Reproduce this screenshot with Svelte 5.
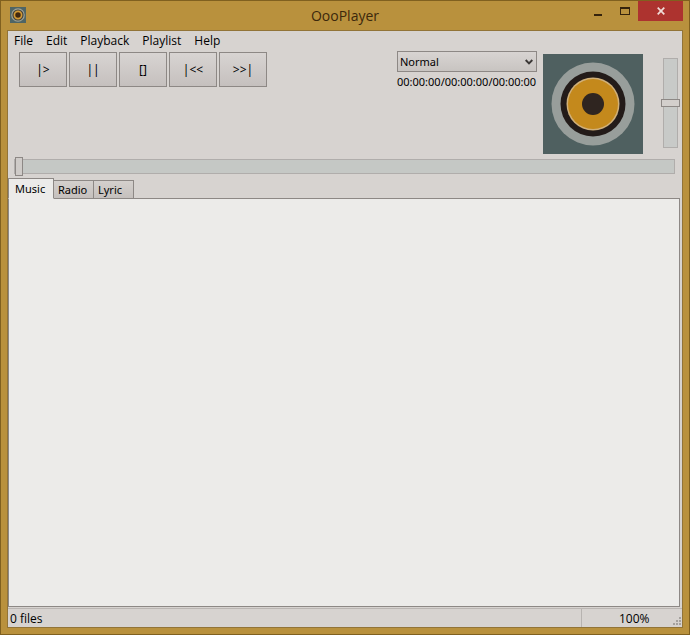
<!--
	OooPlayer main window: menu, transport buttons, seek and volume
	sliders, a tabbed playlist area and the status bar.
-->
<script lang="ts">
	interface Transport {
		glyph: string;
		label: string;
	}

	const menus: string[] = ['File', 'Edit', 'Playback', 'Playlist', 'Help'];
	const tabs: string[] = ['Music', 'Radio', 'Lyric'];
	const modes: string[] = ['Normal', 'Repeat', 'Shuffle'];

	const transport: Transport[] = [
		{ glyph: '|>', label: 'Play' },
		{ glyph: '||', label: 'Pause' },
		{ glyph: '[]', label: 'Stop' },
		{ glyph: '|<<', label: 'Previous' },
		{ glyph: '>>|', label: 'Next' }
	];

	let activeTab: string = $state('Music');
	let mode: string = $state('Normal');
	let position: number = $state(0);
	let volume: number = $state(50);
</script>

{#snippet speaker()}
	<svg viewBox="0 0 100 100" aria-hidden="true">
		<rect width="100" height="100" fill="#4f6060" />
		<circle cx="50" cy="50" r="41.5" fill="#989e9b" />
		<circle cx="50" cy="50" r="32.5" fill="#231b19" />
		<circle cx="50" cy="50" r="26.5" fill="#d0b07a" />
		<circle cx="50" cy="50" r="25" fill="#c4891c" />
		<circle cx="50" cy="50" r="11" fill="#2f2520" />
	</svg>
{/snippet}

<div class="window">
	<header class="titlebar">
		<span class="app-icon">
			<svg viewBox="0 0 16 16" aria-hidden="true">
				<rect width="16" height="16" fill="#4f6565" />
				<circle cx="8" cy="8" r="6.2" fill="#40403a" stroke="#a0a294" stroke-width="1.2" />
				<circle cx="8" cy="8" r="3.6" fill="#40280f" stroke="#d39a35" stroke-width="1.7" />
				<circle cx="8" cy="8" r="1.5" fill="#40280f" />
			</svg>
		</span>
		<h1>OooPlayer</h1>
		<div class="controls">
			<button type="button" aria-label="Minimize">
				<svg width="10" height="10" viewBox="0 0 10 10"><path d="M1 8h8v2H1z" fill="#35230c" /></svg>
			</button>
			<button type="button" aria-label="Maximize">
				<svg width="10" height="10" viewBox="0 0 10 10">
					<path d="M0 1h10v8H0zM1 3v5h8V3z" fill="#35230c" fill-rule="evenodd" />
				</svg>
			</button>
			<button type="button" class="close" aria-label="Close">
				<svg width="8" height="8" viewBox="0 0 8 8"><path d="M.7.7l6.6 6.6M7.3.7L.7 7.3" stroke="#f0dcd8" stroke-width="1.7" /></svg>
			</button>
		</div>
	</header>

	<main class="client">
		<nav class="menubar" aria-label="Main menu">
			{#each menus as item (item)}
				<button type="button">{item}</button>
			{/each}
		</nav>

		<section class="player">
			<div class="transport">
				{#each transport as button (button.label)}
					<button type="button" aria-label={button.label}>{button.glyph}</button>
				{/each}
			</div>

			<div class="info">
				<div class="mode">
					<select aria-label="Play mode" bind:value={mode}>
						{#each modes as name (name)}
							<option value={name}>{name}</option>
						{/each}
					</select>
					<svg width="8" height="6" viewBox="0 0 8 6" aria-hidden="true">
						<path d="M.7 1L4 4.4 7.3 1" fill="none" stroke="#3a3735" stroke-width="1.9" />
					</svg>
				</div>
				<span class="time">00:00:00/00:00:00/00:00:00</span>
			</div>

			<div class="cover">{@render speaker()}</div>

			<input class="volume" type="range" aria-label="Volume" min="0" max="100" bind:value={volume} />
		</section>

		<input class="seek" type="range" aria-label="Position" min="0" max="100" bind:value={position} />

		<div class="tabs" role="tablist">
			{#each tabs as tab (tab)}
				<button
					type="button"
					role="tab"
					aria-selected={tab === activeTab}
					class:active={tab === activeTab}
					onclick={() => (activeTab = tab)}
				>
					{tab}
				</button>
			{/each}
		</div>
		<div class="panel" role="tabpanel" aria-label={activeTab}></div>

		<footer class="status">
			<span class="files">0 files</span>
			<span class="percent">100%</span>
			<svg class="grip" width="10" height="10" viewBox="0 0 10 10" aria-hidden="true">
				<path d="M7 0h2v2H7zM7 3h2v2H7zM7 6h2v2H7zM4 3h2v2H4zM4 6h2v2H4zM1 6h2v2H1z" fill="#a5a19e" />
			</svg>
		</footer>
	</main>
</div>

<style>
	:global(body) {
		margin: 0;
	}

	.window {
		--face: #d7d3d0;
		--line: #8d8885;
		--gold: #b9913d;

		box-sizing: border-box;
		display: flex;
		flex-direction: column;
		min-height: 100vh;
		padding: 0 6px 6px;
		background: var(--gold);
		border: 1px solid #80601f;
		font-family: 'Noto Sans', 'Open Sans', sans-serif;
		font-size: 11px;
		color: #000;
	}

	button,
	select,
	input {
		box-sizing: border-box;
		margin: 0;
		padding: 0;
		font: inherit;
		color: inherit;
		border: 0;
		border-radius: 0;
		background: none;
	}

	.titlebar {
		display: grid;
		grid-template-columns: 1fr auto 1fr;
		height: 29px;
	}

	.app-icon {
		width: 16px;
		height: 16px;
		margin: 6px 0 0 3px;
	}

	.app-icon svg,
	.cover svg {
		display: block;
		width: 100%;
		height: 100%;
	}

	h1 {
		margin: 0;
		font-family: 'Open Sans', 'Noto Sans', sans-serif;
		font-size: 14px;
		font-weight: 400;
		line-height: 29px;
		color: #3c280c;
	}

	.controls {
		display: flex;
		justify-content: flex-end;
	}

	.controls button {
		display: flex;
		align-items: center;
		justify-content: center;
		width: 27px;
		height: 20px;
	}

	.controls .close {
		width: 45px;
		background: #ad332f;
	}

	.client {
		display: flex;
		flex: 1;
		flex-direction: column;
		background: var(--face);
		border: 1px solid #927438;
	}

	.menubar {
		display: flex;
		gap: 13px;
		height: 20px;
		padding-left: 6px;
		font-family: 'Open Sans', 'Noto Sans', sans-serif;
		font-size: 12px;
		line-height: 20px;
	}

	.player {
		display: flex;
		align-items: flex-start;
		padding: 0 2px 0 11px;
	}

	.transport {
		display: flex;
		gap: 2px;
		margin: 1px auto 0 0;
	}

	.transport button {
		width: 48px;
		height: 35px;
		background: linear-gradient(#d8d4d2, #c5c0be);
		border: 1px solid var(--line);
		font-size: 12px;
	}

	.info {
		width: 140px;
		margin-right: 6px;
	}

	.mode {
		position: relative;
	}

	.mode select {
		display: block;
		width: 100%;
		height: 21px;
		padding-left: 2px;
		appearance: none;
		background: linear-gradient(#d8d4d2, #c8c4c1);
		border: 1px solid var(--line);
	}

	.mode svg {
		position: absolute;
		top: 8px;
		right: 4px;
		pointer-events: none;
	}

	.time {
		display: block;
		line-height: 20px;
		white-space: nowrap;
	}

	.cover {
		width: 100px;
		height: 100px;
		margin: 3px 18px 0 0;
	}

	input[type='range'] {
		appearance: none;
		cursor: default;
	}

	.volume {
		width: 19px;
		height: 90px;
		margin-top: 7px;
		writing-mode: vertical-lr;
		direction: rtl;
	}

	.volume::-webkit-slider-runnable-track {
		box-sizing: border-box;
		width: 15px;
		height: 90px;
		background: #c8cac8;
		border: 1px solid #b0adab;
	}

	.volume::-webkit-slider-thumb {
		box-sizing: border-box;
		width: 19px;
		height: 8px;
		margin-left: -3px;
		appearance: none;
		background: #d3cfcc;
		border: 1px solid var(--line);
	}

	.seek {
		width: auto;
		height: 20px;
		margin: 2px 7px 0 6px;
	}

	.seek::-webkit-slider-runnable-track {
		box-sizing: border-box;
		height: 15px;
		background: #c5c8c5;
		border: 1px solid #b0adab;
	}

	.seek::-webkit-slider-thumb {
		box-sizing: border-box;
		width: 8px;
		height: 19px;
		margin-top: -3px;
		appearance: none;
		background: #cfcbc8;
		border: 1px solid var(--line);
	}

	.tabs {
		display: flex;
		align-items: flex-end;
		height: 21px;
		margin-top: 2px;
	}

	.tabs button {
		width: 41px;
		height: 19px;
		margin-right: -1px;
		padding-left: 4px;
		background: linear-gradient(#d4d0cd, #c5c0bd);
		border: 1px solid var(--line);
		text-align: left;
	}

	/* the selected tab is taller and runs into the panel below it */
	.tabs .active {
		z-index: 1;
		width: 46px;
		height: 21px;
		padding: 0 0 1px 6px;
		background: #ecebe9;
		border-bottom-color: #ecebe9;
	}

	.panel {
		flex: 1;
		margin: -1px 2px 1px 0;
		background: #ecebe9;
		border: 1px solid var(--line);
	}

	.status {
		display: flex;
		height: 18px;
		border-top: 1px solid #bbb6b3;
		font-family: 'Open Sans', 'Noto Sans', sans-serif;
		font-size: 12px;
		line-height: 20px;
	}

	.files {
		flex: 1;
		padding-left: 2px;
	}

	.percent {
		width: 63px;
		padding-left: 37px;
		border-left: 1px solid #b7b3b0;
	}

	.grip {
		align-self: flex-end;
		margin-left: -10px;
	}
</style>
